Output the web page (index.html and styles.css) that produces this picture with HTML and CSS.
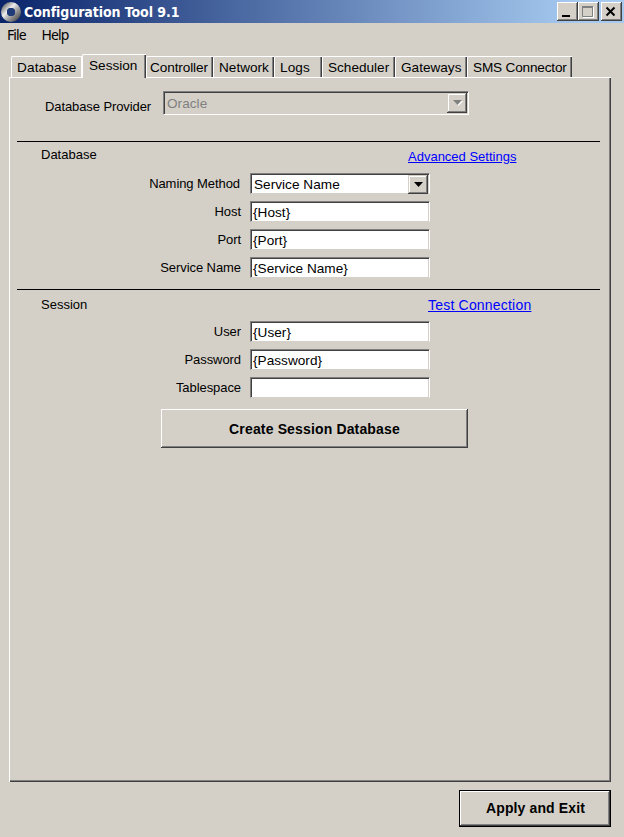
FILE: index.html
```html
<!DOCTYPE html>
<html lang="en">
<head>
<meta charset="utf-8">
<title>Configuration Tool 9.1</title>
<link rel="stylesheet" href="styles.css">
</head>
<body>
<div class="window">
  <header class="titlebar">
    <svg class="app-icon" width="22" height="22" viewBox="0 0 22 22">
      <defs>
        <linearGradient id="ring" x1="0" y1="0" x2="1" y2="1">
          <stop offset="0" stop-color="#777"/><stop offset=".35" stop-color="#eee"/>
          <stop offset=".6" stop-color="#aaa"/><stop offset="1" stop-color="#555"/>
        </linearGradient>
      </defs>
      <circle cx="11" cy="11" r="7" fill="none" stroke="url(#ring)" stroke-width="6"/>
      <circle cx="11" cy="11" r="4" fill="#203c78"/>
    </svg>
    <h1>Configuration Tool 9.1</h1>
    <div class="controls">
      <button class="ctl"><svg width="17" height="15"><path d="M4 12h8" stroke="#000" stroke-width="2"/></svg></button>
      <button class="ctl"><svg width="17" height="15" fill="none"><path d="M4 13.500h10.500M14.500 3v11" stroke="#fff"/><path d="M3.500 3v9.500h10V3" stroke="#808080"/><path d="M3 3h11" stroke="#808080" stroke-width="2"/></svg></button>
      <button class="ctl close"><svg width="17" height="15"><path d="M4.500 3.500l8 8M12.500 3.500l-8 8" stroke="#000" stroke-width="2"/></svg></button>
    </div>
  </header>
  <nav class="menu"><span class="file">File</span><span>Help</span></nav>
  <main>
    <div class="tabs">
      <div class="tab database">Database</div>
      <div class="tab session selected">Session</div>
      <div class="tab controller">Controller</div>
      <div class="tab network">Network</div>
      <div class="tab logs">Logs</div>
      <div class="tab scheduler">Scheduler</div>
      <div class="tab gateways">Gateways</div>
      <div class="tab sms">SMS Connector</div>
    </div>
    <section class="panel">
      <div class="provider">
        <label>Database Provider</label>
        <div class="field combo disabled"><span>Oracle</span><i class="drop"><svg width="11" height="8"><path d="M2 2h9L6.500 7z" fill="#fff"/><path d="M1 1h9L5.500 6z" fill="#808080"/></svg></i></div>
      </div>
      <div class="group">
        <div class="head"><span>Database</span><a class="advanced">Advanced Settings</a></div>
        <div class="form">
          <label class="naming">Naming Method</label>
          <div class="field combo"><span>Service Name</span><i class="drop"><svg width="11" height="7"><path d="M1 1h9L5.500 6z" fill="#000"/></svg></i></div>
          <label>Host</label><div class="field">{Host}</div>
          <label>Port</label><div class="field">{Port}</div>
          <label>Service Name</label><div class="field">{Service Name}</div>
        </div>
      </div>
      <div class="group second">
        <div class="head"><span>Session</span><a class="test">Test Connection</a></div>
        <div class="form">
          <label>User</label><div class="field">{User}</div>
          <label>Password</label><div class="field">{Password}</div>
          <label>Tablespace</label><div class="field"></div>
        </div>
      </div>
      <button class="create">Create Session Database</button>
    </section>
  </main>
  <footer><button class="apply">Apply and Exit</button></footer>
</div>
</body>
</html>
```
FILE: styles.css
```css
* { box-sizing: border-box; }
body { margin: 0; background: #d4d0c8; color: #000; font: 13px/16px "Liberation Sans", Arial, sans-serif; }
button { font: inherit; color: inherit; background: #d4d0c8; padding: 0; margin: 0; border: 0; border-radius: 0; }
svg { display: block; }
.window { width: 624px; height: 837px; overflow: hidden; display: flex; flex-direction: column; }

.titlebar { height: 23px; flex: none; display: flex; align-items: center; padding-right: 2px; background: linear-gradient(90deg, #0a246a, #a6caf0 93%); }
.app-icon { margin-right: 2px; }
.titlebar h1 { margin: 0; flex: 1; color: #fff; font: bold 14px/22px "DejaVu Sans Condensed", "DejaVu Sans", sans-serif; font-stretch: condensed; letter-spacing: -.06px; }
.controls { display: flex; margin-top: -1px; }
.ctl { width: 21px; height: 19px; box-shadow: inset -1px -1px #404040, inset 1px 1px #fff, inset -2px -2px #808080; display: flex; padding: 2px 0 0 1px; }
.close { margin-left: 2px; }

.menu { height: 31px; flex: none; display: flex; gap: 16px; padding: 3px 7px; font: 14px/17px "Noto Sans", sans-serif; letter-spacing: -.95px; }

main { padding: 0 13px 0 9px; }
.tabs { height: 23px; display: flex; align-items: flex-end; padding-left: 2px; }
.tab { height: 21px; flex: none; padding: 3px 0 0 6px; white-space: nowrap; font-size: 13.6px; letter-spacing: 0; border-top: 1px solid #fff; border-left: 1px solid #fff; border-top-left-radius: 2px; box-shadow: inset -1px 0 #404040, inset -2px 0 #808080; }
.tab.database { width: 71px; padding-left: 5px; letter-spacing: .15px; box-shadow: inset -1px 0 #fff; }
.tab.selected { width: 64px; height: 24px; margin-bottom: -1px; background: #d4d0c8; z-index: 1; padding-top: 3px; }
.tab.controller { width: 67px; padding-left: 3px; letter-spacing: -.1px; }
.tab.network { width: 61px; padding-left: 5px; }
.tab.logs { width: 48px; padding-left: 5px; letter-spacing: .1px; }
.tab.scheduler { width: 73px; padding-left: 5px; }
.tab.gateways { width: 72px; padding-left: 5px; }
.tab.sms { width: 105px; padding-left: 5px; letter-spacing: -.18px; }

.panel { height: 705px; padding: 13px 9px 0 7px; border-top: 1px solid #fff; border-left: 1px solid #fff; box-shadow: inset -1px -1px #404040, inset -2px -2px #808080; }
.provider { height: 50px; display: grid; grid-template-columns: 134px 306px; column-gap: 12px; align-items: start; }
.provider label { text-align: right; padding-top: 8px; letter-spacing: -.1px; }
.provider .field { height: 24px; border-bottom-color: #fff; padding-top: 4px; }

.group { height: 148px; border-top: 1px solid #000; width: 583px; }
.group.second { height: 120px; }
.head { height: 31px; display: flex; padding: 5px 0 0 24px; }
.second .head span { padding-top: 2px; }
.head span { width: 367px; }
.head a { color: #00f; text-decoration: underline; padding-top: 2px; }
.head .test { font-size: 14px; letter-spacing: .2px; margin-left: 20px; padding-top: 2px; }
.form { display: grid; grid-template-columns: 224px 180px; column-gap: 9px; row-gap: 7px; }
.form label { text-align: right; padding-top: 3px; letter-spacing: -.07px; }
.naming { position: relative; left: -1px; }
.field { height: 21px; background: #fff; padding: 3px 0 0 1px; font-size: 13.6px; line-height: 16px; letter-spacing: .03px; border: 1px solid #808080; border-right-color: #fff; border-bottom-color: #d4d0c8; box-shadow: inset 1px 1px #404040, inset -1px 0 #d4d0c8; white-space: nowrap; }
.form .field { padding-left: 2px; }
.combo { display: flex; justify-content: space-between; }
.combo .drop { width: 20px; height: 19px; margin: -2px 1px 0 0; background: #d4d0c8; display: flex; align-items: center; justify-content: center; box-shadow: inset -1px -1px #404040, inset 1px 1px #d4d0c8, inset -2px -2px #808080, inset 2px 2px #fff; }
.form .combo span { padding-left: 1px; }
.disabled { background: #d4d0c8; color: #808080; }
.disabled span { padding-left: 2px; }
.provider .drop { margin-top: -3px; height: 20px; }
.create { display: block; width: 307px; height: 39px; margin: 0 0 0 144px; font-weight: bold; font-size: 14px; letter-spacing: .15px; box-shadow: inset -1px -1px #404040, inset 1px 1px #fff, inset -2px -2px #808080; }
footer { padding: 8px 13px 0; display: flex; justify-content: flex-end; }
.apply { width: 152px; height: 37px; padding: 0 0 2px 1px; border: 1px solid #000; font-weight: bold; font-size: 14px; letter-spacing: .12px; box-shadow: inset -1px -1px #404040, inset 1px 1px #fff, inset -2px -2px #808080; }
```
